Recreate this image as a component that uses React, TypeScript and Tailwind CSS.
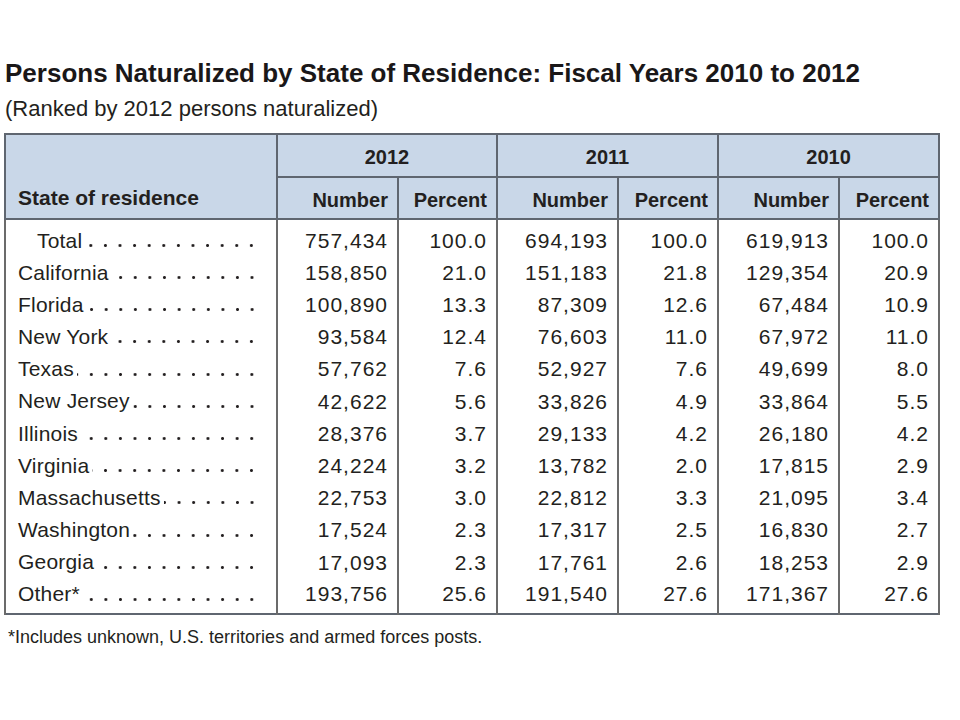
const rows = [
  { state: "Total", indent: true, values: ["757,434", "100.0", "694,193", "100.0", "619,913", "100.0"] },
  { state: "California", values: ["158,850", "21.0", "151,183", "21.8", "129,354", "20.9"] },
  { state: "Florida", values: ["100,890", "13.3", "87,309", "12.6", "67,484", "10.9"] },
  { state: "New York", values: ["93,584", "12.4", "76,603", "11.0", "67,972", "11.0"] },
  { state: "Texas", values: ["57,762", "7.6", "52,927", "7.6", "49,699", "8.0"] },
  { state: "New Jersey", values: ["42,622", "5.6", "33,826", "4.9", "33,864", "5.5"] },
  { state: "Illinois", values: ["28,376", "3.7", "29,133", "4.2", "26,180", "4.2"] },
  { state: "Virginia", values: ["24,224", "3.2", "13,782", "2.0", "17,815", "2.9"] },
  { state: "Massachusetts", values: ["22,753", "3.0", "22,812", "3.3", "21,095", "3.4"] },
  { state: "Washington", values: ["17,524", "2.3", "17,317", "2.5", "16,830", "2.7"] },
  { state: "Georgia", values: ["17,093", "2.3", "17,761", "2.6", "18,253", "2.9"] },
  { state: "Other*", values: ["193,756", "25.6", "191,540", "27.6", "171,367", "27.6"] },
];

const years = ["2012", "2011", "2010"];

// dot leader drawn as a repeating background, anchored to the right edge
function StateCell({ name, indent }: { name: string; indent?: boolean }) {
  return (
    <div className={`flex items-end pr-[17px] ${indent ? "pl-[31px]" : "pl-[12px]"}`}>
      <span className="whitespace-nowrap tracking-[0.2px] leading-[24px]">{name}</span>
      <span className="flex-1 ml-[3px] mb-[5.5px] h-[3px] bg-[radial-gradient(circle,#231f20_1.2px,transparent_1.7px)] bg-[length:14.6px_3px] bg-right bg-repeat-x" />
    </div>
  );
}

export default function App() {
  return (
    <div className="w-[960px] h-[720px] bg-white text-[#231f20] font-['Liberation_Sans',Arial,sans-serif]">
      <div className="pt-[56px] pl-[5px]">
        <h1 className="text-[26px] leading-[34px] font-bold text-[#1a1718]">
          Persons Naturalized by State of Residence: Fiscal Years 2010 to 2012
        </h1>
        <p className="mt-[5px] text-[22px] leading-[28px]">(Ranked by 2012 persons naturalized)</p>
      </div>

      <table className="mt-[10px] ml-[4px] border-collapse border-2 border-[#5f6670] table-fixed w-[935px]">
        <colgroup>
          <col className="w-[272px]" />
          <col className="w-[121px]" />
          <col className="w-[99px]" />
          <col className="w-[121px]" />
          <col className="w-[100px]" />
          <col className="w-[121px]" />
          <col className="w-[100px]" />
        </colgroup>
        <thead className="bg-[#c9d7e8] text-[20px] font-bold">
          <tr className="h-[43px]">
            <th
              rowSpan={2}
              className="border-2 border-[#5f6670] align-bottom text-left pl-[12px] pb-[5px] text-[21px] font-bold"
            >
              State of residence
            </th>
            {years.map((y) => (
              <th key={y} colSpan={2} className="border-2 border-[#5f6670] text-center pt-[2px]">
                {y}
              </th>
            ))}
          </tr>
          <tr className="h-[42px]">
            {years.map((y) => (
              <>
                <th key={y + "n"} className="border-2 border-[#5f6670] text-right pr-[9px] pt-[3px]">
                  Number
                </th>
                <th key={y + "p"} className="border-2 border-[#5f6670] text-right pr-[9px] pt-[3px]">
                  Percent
                </th>
              </>
            ))}
          </tr>
        </thead>
        <tbody className="text-[21px]">
          {rows.map((r, i) => {
            const first = i === 0;
            const last = i === rows.length - 1;
            const pad = first ? "pt-[5px]" : last ? "pb-[3px]" : "";
            return (
              <tr key={r.state} className={first ? "h-[37.4px]" : last ? "h-[35.2px]" : "h-[32.2px]"}>
                <td className={`border-x-2 border-[#6b6b6b] p-0 ${pad}`}>
                  <StateCell name={r.state} indent={r.indent} />
                </td>
                {r.values.map((v, j) => (
                  <td
                    key={j}
                    className={`border-x-2 border-[#6b6b6b] text-right pr-[9px] tracking-[1px] ${pad}`}
                  >
                    {v}
                  </td>
                ))}
              </tr>
            );
          })}
        </tbody>
      </table>

      <p className="mt-[11px] pl-[8px] text-[18px] leading-[22px]">
        *Includes unknown, U.S. territories and armed forces posts.
      </p>
    </div>
  );
}
